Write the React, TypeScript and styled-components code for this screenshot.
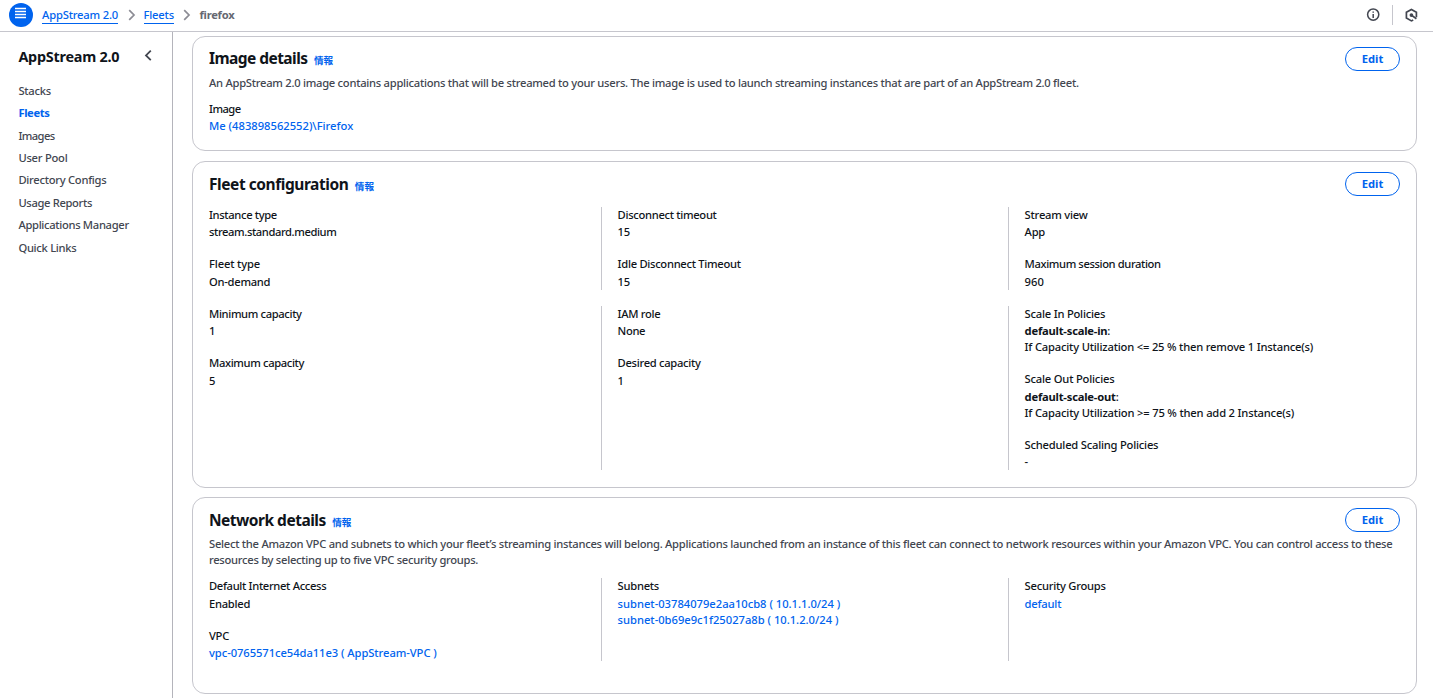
import React from 'react';
import styled, { createGlobalStyle } from 'styled-components';

const BLUE = '#0063ee';
const LINE = '#c6c6cd';

const GlobalStyle = createGlobalStyle`
  * { box-sizing: border-box; }
  body {
    margin: 0;
    overflow: hidden;
    background: #fff;
    color: #0f141a;
    font: 500 11.2px/16px "Noto Sans", "Noto Sans CJK JP", sans-serif;
  }
`;

const Text = styled.span<{ $track?: number }>`
  letter-spacing: ${(p) => p.$track ?? -0.27}px;
  white-space: nowrap;
`;

const Page = styled.div`
  display: flex;
  flex-direction: column;
  height: 698px;
  overflow: hidden;
`;

const TopBar = styled.header`
  display: flex;
  align-items: center;
  flex: none;
  height: 32px;
  padding: 0 14px 2px 9px;
  border-bottom: 1px solid ${LINE};
`;

const MenuButton = styled.button`
  display: flex;
  width: 24px;
  height: 24px;
  margin: 0 9px 0 0;
  padding: 0;
  border: 0;
  border-radius: 50%;
  background: ${BLUE};
`;

const Crumbs = styled.nav`
  display: flex;
  align-items: center;
`;

const CrumbLink = styled(Text)`
  height: 17px;
  padding-top: 1px;
  color: ${BLUE};
  box-shadow: 0 1px 0 ${BLUE};
`;

const CrumbCurrent = styled(Text)`
  padding-top: 1px;
  color: #656871;
  font-weight: 700;
`;

const Chevron = styled.svg`
  width: 8px;
  height: 12px;
  margin: 0 8px 0 9.6px;
`;

const Tools = styled.div`
  display: flex;
  align-items: center;
  margin-left: auto;
`;

const ToolDivider = styled.i`
  width: 1px;
  height: 20px;
  margin: 1px 11px 0 12px;
  background: ${LINE};
`;

const Body = styled.div`
  display: flex;
  flex: 1;
  min-height: 0;
`;

const Sidebar = styled.aside`
  width: 173px;
  flex: none;
  padding: 16px 20px 0 18.4px;
  border-right: 1px solid #b4b4bb;
`;

const SidebarHead = styled.div`
  display: flex;
  justify-content: space-between;
  height: 32px;
  margin-bottom: 2.85px;
`;

const SidebarTitle = styled(Text)`
  font-size: 14.4px;
  line-height: 18px;
  font-weight: 700;
`;

const NavList = styled.ul`
  margin: 0;
  padding: 0;
  list-style: none;
`;

const NavItem = styled.li<{ $active?: boolean }>`
  height: 22.4px;
  color: ${(p) => (p.$active ? BLUE : '#424650')};
  font-weight: ${(p) => (p.$active ? 700 : 500)};
`;

const Main = styled.main`
  display: flex;
  flex: 1;
  flex-direction: column;
  gap: 10px;
  min-width: 0;
  padding: 4px 16px 0 19px;
`;

const Card = styled.section<{ $height: number; $lift?: number }>`
  flex: none;
  height: ${(p) => p.$height}px;
  margin-top: ${(p) => -(p.$lift ?? 0)}px;
  padding: 10px 16px 0;
  border: 1px solid ${LINE};
  border-radius: 13px;
`;

const CardHead = styled.div`
  display: flex;
  align-items: flex-start;
  height: 28px;
`;

const CardTitle = styled.h2<{ $drop: number }>`
  display: flex;
  align-items: baseline;
  gap: 6.5px;
  margin: ${(p) => p.$drop}px 0 0;
  font-size: 15.5px;
  line-height: 20px;
  font-weight: 700;
`;

const InfoLink = styled.a`
  color: ${BLUE};
  font: 700 9.6px/14px "Noto Sans CJK JP", sans-serif;
`;

const EditButton = styled.button`
  width: 55px;
  height: 24px;
  margin-left: auto;
  padding: 0;
  border: 1px solid ${BLUE};
  border-radius: 12px;
  background: #fff;
  color: ${BLUE};
  font: 700 11.2px/20px "Noto Sans", sans-serif;
`;

const Description = styled.p`
  margin: 0;
  color: #424650;
  white-space: nowrap;
`;

const Columns = styled.div<{ $gap?: number }>`
  display: grid;
  grid-template-columns: 392px 407px 1fr;
  margin-top: ${(p) => p.$gap ?? 0}px;
`;

const Column = styled.div`
  display: flex;
  flex-direction: column;
  gap: 16px;

  & + & {
    padding-left: 15.6px;
    border-left: 1px solid ${LINE};
  }
`;

const FieldBox = styled.div`
  display: flex;
  flex-direction: column;
`;

const Label = styled(Text)`
  margin-bottom: 1.4px;
`;

const Link = styled(Text)`
  color: ${BLUE};
`;

const Strong = styled(Text)`
  font-weight: 700;
`;

type FieldProps = { label: string; track?: number; children: React.ReactNode };

const Field = ({ label, track, children }: FieldProps) => (
  <FieldBox>
    <Label $track={track}>{label}</Label>
    {children}
  </FieldBox>
);

type HeadProps = { title: string; track: number; drop?: number };

const Head = ({ title, track, drop = 2 }: HeadProps) => (
  <CardHead>
    <CardTitle $drop={drop}>
      <Text $track={track}>{title}</Text>
      <InfoLink>情報</InfoLink>
    </CardTitle>
    <EditButton>Edit</EditButton>
  </CardHead>
);

const Separator = () => (
  <Chevron viewBox="0 0 8 12" fill="none" stroke="#8c8c94" strokeWidth="1.7">
    <path d="M1.2 1.2 6 6l-4.8 4.8" />
  </Chevron>
);

const navItems: { name: string; track: number; active?: boolean }[] = [
  { name: 'Stacks', track: -0.25 },
  { name: 'Fleets', track: -0.38, active: true },
  { name: 'Images', track: -0.6 },
  { name: 'User Pool', track: -0.25 },
  { name: 'Directory Configs', track: -0.27 },
  { name: 'Usage Reports', track: -0.34 },
  { name: 'Applications Manager', track: -0.32 },
  { name: 'Quick Links', track: -0.28 },
];

export default function App() {
  return (
    <Page>
      <GlobalStyle />
      <TopBar>
        <MenuButton aria-label="Menu">
          <svg width="24" height="24" viewBox="0 0 24 24" stroke="#fff" strokeWidth="1.3">
            <path d="M6 5.5h11M6 8.5h11M6 11.5h11M6 14.5h11" />
          </svg>
        </MenuButton>
        <Crumbs>
          <CrumbLink $track={-0.18}>AppStream 2.0</CrumbLink>
          <Separator />
          <CrumbLink $track={-0.2}>Fleets</CrumbLink>
          <Separator />
          <CrumbCurrent $track={-0.25}>firefox</CrumbCurrent>
        </Crumbs>
        <Tools>
          <svg width="14" height="14" viewBox="0 0 14 14" fill="none" stroke="#424650" strokeWidth="1.5">
            <circle cx="7.2" cy="6.6" r="5.6" />
            <path d="M7.2 5.9v4M7.2 3.5v1.3" />
          </svg>
          <ToolDivider />
          <svg width="15" height="14" viewBox="0 0 15 14" fill="none" stroke="#424650" strokeWidth="1.7">
            <path d="M9.2 11.9 7.4 12.9 2.4 10.1V4.3L7.4 1.5l5 2.8v5" />
            <path d="M7.4 7.1l5 3.7" />
            <circle cx="7.4" cy="7.1" r="1" fill="#424650" />
          </svg>
        </Tools>
      </TopBar>
      <Body>
        <Sidebar>
          <SidebarHead>
            <SidebarTitle $track={-0.23}>AppStream 2.0</SidebarTitle>
            <svg width="8" height="14" viewBox="0 0 8 14" fill="none" stroke="#424650" strokeWidth="1.8">
              <path d="M6.8 2.6 2 7.4l4.8 4.8" />
            </svg>
          </SidebarHead>
          <NavList>
            {navItems.map((item) => (
              <NavItem key={item.name} $active={item.active}>
                <Text $track={item.track}>{item.name}</Text>
              </NavItem>
            ))}
          </NavList>
        </Sidebar>
        <Main>
          <Card $height={115}>
            <Head title="Image details" track={-0.55} drop={1} />
            <Description>
              <Text $track={-0.267}>
                An AppStream 2.0 image contains applications that will be streamed to your users. The image is used to
                launch streaming instances that are part of an AppStream 2.0 fleet.
              </Text>
            </Description>
            <Columns $gap={10}>
              <Column>
                <Field label="Image" track={-0.55}>
                  <Link $track={0}>Me (483898562552)\Firefox</Link>
                </Field>
              </Column>
            </Columns>
          </Card>

          <Card $height={327}>
            <Head title="Fleet configuration" track={-0.44} />
            <Columns $gap={7}>
              <Column>
                <Field label="Instance type" track={-0.35}>
                  <Text $track={-0.4}>stream.standard.medium</Text>
                </Field>
                <Field label="Fleet type" track={-0.15}>
                  <Text>On-demand</Text>
                </Field>
              </Column>
              <Column>
                <Field label="Disconnect timeout" track={-0.31}>
                  <Text>15</Text>
                </Field>
                <Field label="Idle Disconnect Timeout" track={-0.29}>
                  <Text>15</Text>
                </Field>
              </Column>
              <Column>
                <Field label="Stream view" track={-0.22}>
                  <Text>App</Text>
                </Field>
                <Field label="Maximum session duration" track={-0.39}>
                  <Text $track={0}>960</Text>
                </Field>
              </Column>
            </Columns>
            <Columns $gap={16.2}>
              <Column>
                <Field label="Minimum capacity" track={-0.36}>
                  <Text>1</Text>
                </Field>
                <Field label="Maximum capacity" track={-0.36}>
                  <Text>5</Text>
                </Field>
              </Column>
              <Column>
                <Field label="IAM role" track={-0.32}>
                  <Text $track={-0.35}>None</Text>
                </Field>
                <Field label="Desired capacity" track={-0.3}>
                  <Text>1</Text>
                </Field>
              </Column>
              <Column>
                <Field label="Scale In Policies" track={-0.22}>
                  <Text>
                    <Strong $track={-0.21}>default-scale-in</Strong>:
                  </Text>
                  <Text $track={-0.19}>If Capacity Utilization &lt;= 25 % then remove 1 Instance(s)</Text>
                </Field>
                <Field label="Scale Out Policies" track={-0.2}>
                  <Text>
                    <Strong $track={-0.21}>default-scale-out</Strong>:
                  </Text>
                  <Text $track={-0.18}>If Capacity Utilization &gt;= 75 % then add 2 Instance(s)</Text>
                </Field>
                <Field label="Scheduled Scaling Policies" track={-0.215}>
                  <Text>-</Text>
                </Field>
              </Column>
            </Columns>
          </Card>

          <Card $height={197} $lift={1}>
            <Head title="Network details" track={-0.5} />
            <Description>
              <Text $track={-0.265}>
                Select the Amazon VPC and subnets to which your fleet’s streaming instances will belong. Applications
                launched from an instance of this fleet can connect to network resources within your Amazon VPC. You can
                control access to these
              </Text>
              <br />
              <Text $track={-0.28}>resources by selecting up to five VPC security groups.</Text>
            </Description>
            <Columns $gap={10.35}>
              <Column>
                <Field label="Default Internet Access" track={-0.33}>
                  <Text>Enabled</Text>
                </Field>
                <Field label="VPC">
                  <Link $track={-0.06}>vpc-0765571ce54da11e3 ( AppStream-VPC )</Link>
                </Field>
              </Column>
              <Column>
                <Field label="Subnets">
                  <Link $track={-0.01}>subnet-03784079e2aa10cb8 ( 10.1.1.0/24 )</Link>
                  <Link $track={-0.01}>subnet-0b69e9c1f25027a8b ( 10.1.2.0/24 )</Link>
                </Field>
              </Column>
              <Column>
                <Field label="Security Groups" track={-0.25}>
                  <Link $track={-0.2}>default</Link>
                </Field>
              </Column>
            </Columns>
          </Card>
        </Main>
      </Body>
    </Page>
  );
}
